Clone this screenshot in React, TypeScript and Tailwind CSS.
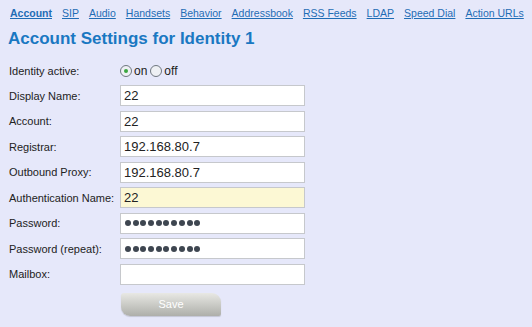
import React from 'react';

const tabs = ['Account', 'SIP', 'Audio', 'Handsets', 'Behavior', 'Addressbook', 'RSS Feeds', 'LDAP', 'Speed Dial', 'Action URLs'];

const fields = [
    { label: 'Display Name:', value: '22' },
    { label: 'Account:', value: '22' },
    { label: 'Registrar:', value: '192.168.80.7' },
    { label: 'Outbound Proxy:', value: '192.168.80.7' },
    { label: 'Authentication Name:', value: '22', focused: true },
    { label: 'Password:', password: true },
    { label: 'Password (repeat):', password: true },
    { label: 'Mailbox:', value: '' },
];

function Radio({ checked }: { checked?: boolean }) {
    return (
        <span className="inline-flex items-center justify-center w-[12px] h-[12px] rounded-full border border-[#6f7780] bg-[#eef0f4]">
            {checked && <span className="w-[4px] h-[4px] rounded-full bg-[#3aa640]" />}
        </span>
    );
}

export default function App() {
    return (
        <div className="w-[532px] h-[327px] bg-[#e6e8fa] text-[#222] font-['Liberation_Sans',Arial,sans-serif] overflow-hidden">
            {/* Tabs */}
            <div className="flex gap-[10px] pl-[10px] pt-[7px] text-[10.5px] leading-[13px] whitespace-nowrap">
                {tabs.map((t, i) => (
                    <a key={t} href="#" className={`shrink-0 underline text-[#1f6db5] ${i === 0 ? 'font-bold text-[#0c5aa0]' : ''}`}>
                        {t}
                    </a>
                ))}
            </div>

            <h1 className="pl-[8px] pt-[9px] text-[17px] leading-[20px] font-bold text-[#1a78c2]">
                Account Settings for Identity 1
            </h1>

            <div className="pl-[9px] pt-[10px] text-[11px]">
                <div className="flex items-center h-[24px]">
                    <div className="w-[111px]">Identity active:</div>
                    <label className="flex items-center gap-[2px]">
                        <Radio checked />
                        <span className="text-[12px]">on</span>
                    </label>
                    <label className="flex items-center gap-[2px] ml-[3px]">
                        <Radio />
                        <span className="text-[12px]">off</span>
                    </label>
                </div>

                {fields.map((f) => (
                    <div key={f.label} className="flex items-center h-[25.5px]">
                        <div className="w-[111px]">{f.label}</div>
                        <div
                            className={`flex items-center w-[185px] h-[21px] border border-[#c6c8cc] px-[3px] text-[13px] ${
                                f.focused ? 'bg-[#fcf8d4] border-[#b8b8b0]' : 'bg-white'
                            }`}
                        >
                            {f.password ? (
                                <div className="flex gap-[1.7px] pl-[1px]">
                                    {Array.from({ length: 10 }).map((_, i) => (
                                        <span key={i} className="w-[6px] h-[6px] rounded-full bg-[#3e4650]" />
                                    ))}
                                </div>
                            ) : (
                                f.value
                            )}
                        </div>
                    </div>
                ))}

                <div className="pl-[112px] pt-[6px]">
                    <button className="w-[100px] h-[23px] rounded-tl-[3px] rounded-tr-[9px] rounded-bl-[9px] rounded-br-[2px] bg-gradient-to-b from-[#e8e8e4] to-[#aeafaa] text-white text-[11px] shadow-[0_1px_1px_rgba(0,0,0,0.15)]">
                        Save
                    </button>
                </div>
            </div>
        </div>
    );
}
